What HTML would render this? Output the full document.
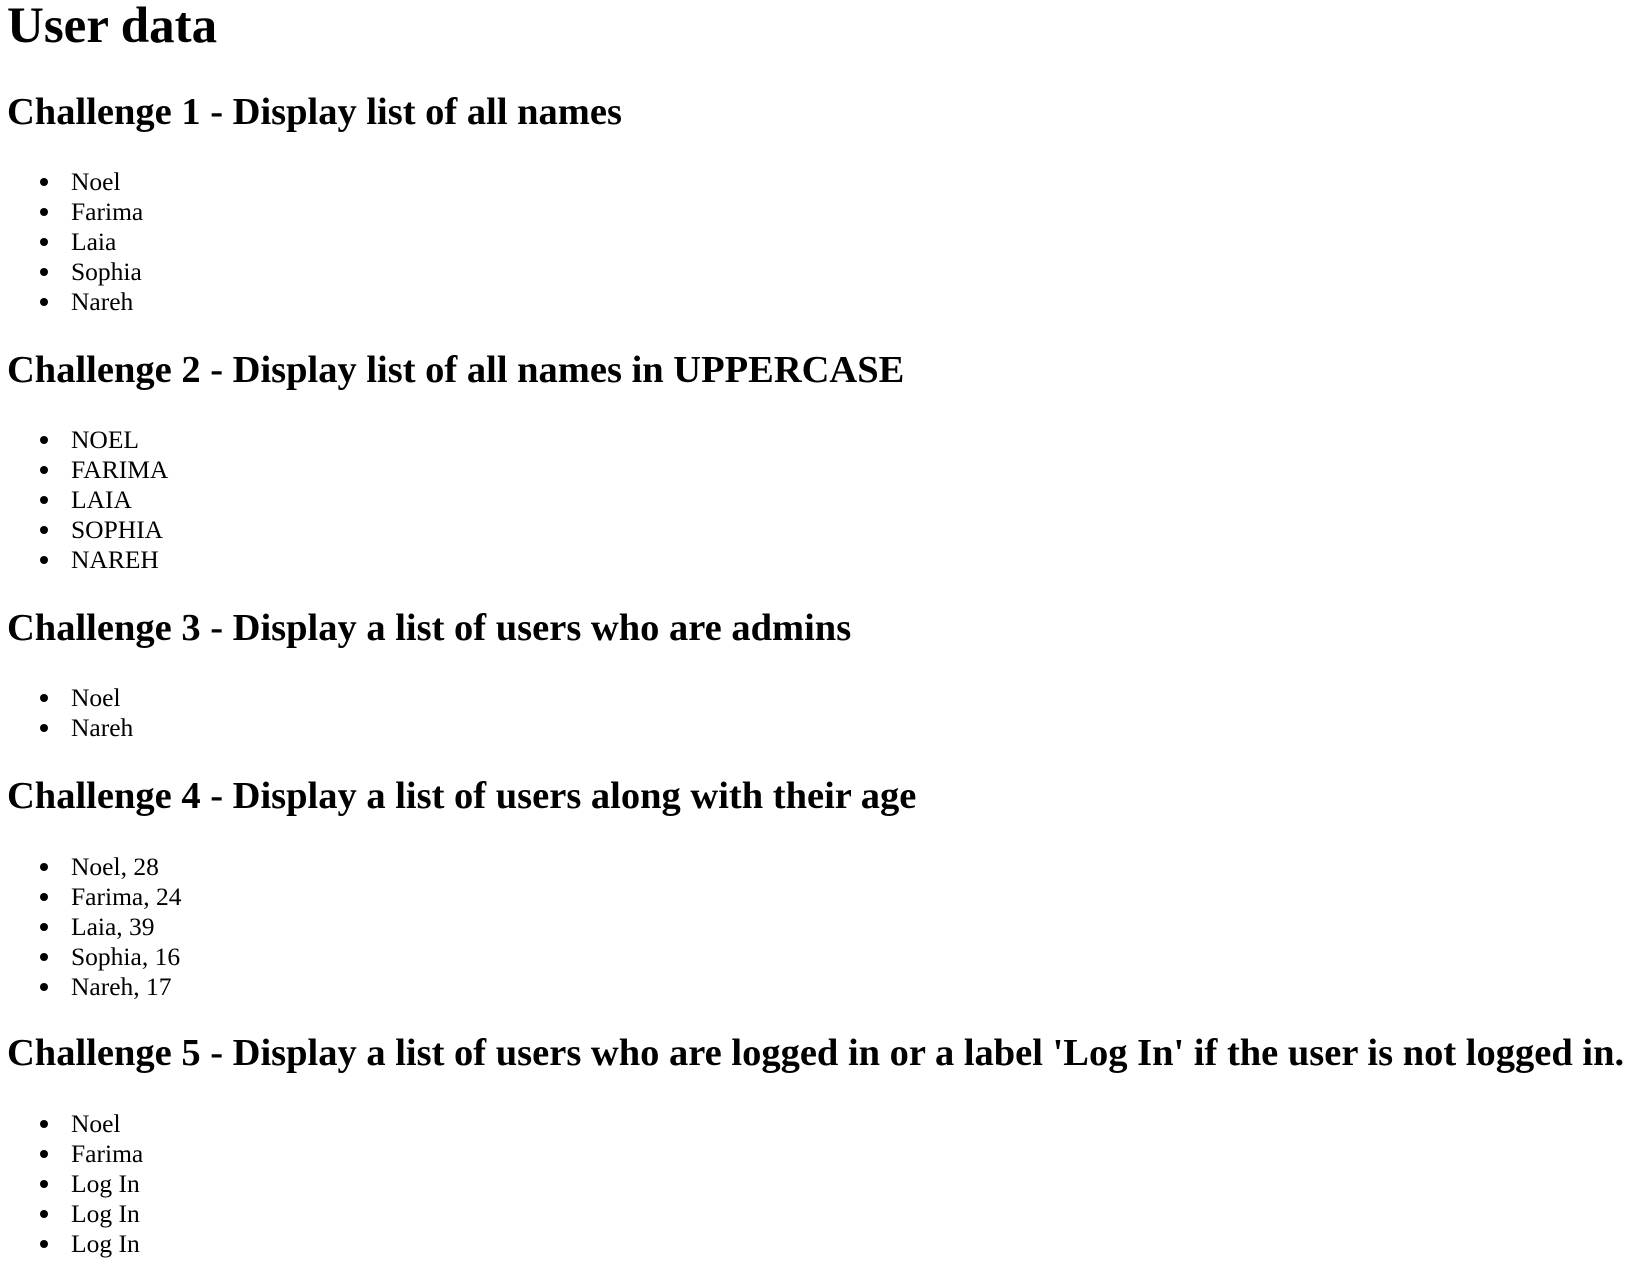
<!DOCTYPE html>
<html><head><meta charset="utf-8"><style>
body{margin:0;background:#fff;color:#000;font-family:"Liberation Serif",serif;width:1642px;height:1266px;position:relative;overflow:hidden}
.h1{position:absolute;left:7px;font-size:51px;font-weight:bold;line-height:52px;white-space:nowrap}
.h2{position:absolute;left:7px;font-size:38.5px;font-weight:bold;line-height:44px;white-space:nowrap}
ul{position:absolute;left:7px;margin:0;padding-left:64px;font-size:25.5px;line-height:30px;list-style:none}
li{position:relative}
li::before{content:"";position:absolute;left:-31px;top:11px;width:8px;height:8px;border-radius:50%;background:#000}
</style></head><body>
<div class="h1" style="top:0px">User data</div>
<div class="h2" style="top:90px">Challenge 1 - Display list of all names</div>
<ul style="top:167px"><li>Noel</li><li>Farima</li><li>Laia</li><li>Sophia</li><li>Nareh</li></ul>
<div class="h2" style="top:348px">Challenge 2 - Display list of all names in UPPERCASE</div>
<ul style="top:425px"><li>NOEL</li><li>FARIMA</li><li>LAIA</li><li>SOPHIA</li><li>NAREH</li></ul>
<div class="h2" style="top:606px">Challenge 3 - Display a list of users who are admins</div>
<ul style="top:683px"><li>Noel</li><li>Nareh</li></ul>
<div class="h2" style="top:774px">Challenge 4 - Display a list of users along with their age</div>
<ul style="top:852px"><li>Noel, 28</li><li>Farima, 24</li><li>Laia, 39</li><li>Sophia, 16</li><li>Nareh, 17</li></ul>
<div class="h2" style="top:1031px">Challenge 5 - Display a list of users who are logged in or a label 'Log In' if the user is not logged in.</div>
<ul style="top:1109px"><li>Noel</li><li>Farima</li><li>Log In</li><li>Log In</li><li>Log In</li></ul>
</body></html>
